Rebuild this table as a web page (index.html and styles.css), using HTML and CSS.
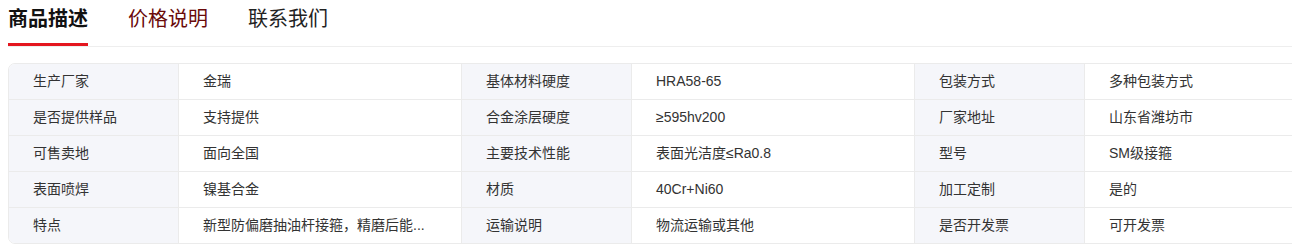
FILE: index.html
```html
<!DOCTYPE html>
<html lang="zh-CN">
<head>
<meta charset="utf-8">
<title>商品描述</title>
<link rel="stylesheet" href="styles.css">
</head>
<body>
<div class="page">
  <div class="tabs">
    <div class="tab active">商品描述</div>
    <div class="tab price">价格说明</div>
    <div class="tab">联系我们</div>
  </div>
  <div class="specs">
    <div class="row">
      <div class="cell label">生产厂家</div>
      <div class="cell value">金瑞</div>
      <div class="cell label">基体材料硬度</div>
      <div class="cell value">HRA58-65</div>
      <div class="cell label">包装方式</div>
      <div class="cell value">多种包装方式</div>
    </div>
    <div class="row">
      <div class="cell label">是否提供样品</div>
      <div class="cell value">支持提供</div>
      <div class="cell label">合金涂层硬度</div>
      <div class="cell value">≥595hv200</div>
      <div class="cell label">厂家地址</div>
      <div class="cell value">山东省潍坊市</div>
    </div>
    <div class="row">
      <div class="cell label">可售卖地</div>
      <div class="cell value">面向全国</div>
      <div class="cell label">主要技术性能</div>
      <div class="cell value">表面光洁度≤Ra0.8</div>
      <div class="cell label">型号</div>
      <div class="cell value">SM级接箍</div>
    </div>
    <div class="row">
      <div class="cell label">表面喷焊</div>
      <div class="cell value">镍基合金</div>
      <div class="cell label">材质</div>
      <div class="cell value">40Cr+Ni60</div>
      <div class="cell label">加工定制</div>
      <div class="cell value">是的</div>
    </div>
    <div class="row">
      <div class="cell label">特点</div>
      <div class="cell value">新型防偏磨抽油杆接箍，精磨后能...</div>
      <div class="cell label">运输说明</div>
      <div class="cell value">物流运输或其他</div>
      <div class="cell label">是否开发票</div>
      <div class="cell value">可开发票</div>
    </div>
  </div>
</div>
</body>
</html>
```

FILE: styles.css
```css
html, body {
  margin: 0;
  padding: 0;
  overflow: hidden;
  background: #fff;
}

body {
  font-family: "Liberation Sans", "Noto Sans CJK SC", sans-serif;
  color: #333;
}

.page {
  padding-left: 8px;
}

.tabs {
  display: flex;
  gap: 40px;
  padding-top: 5px;
  border-bottom: 1px solid #eeeeee;
}

.tab {
  font-size: 20px;
  line-height: 28px;
  padding-bottom: 10px;
  border-bottom: 3px solid transparent;
  color: #222;
}

.tab.active {
  font-weight: 700;
  color: #111;
  border-bottom-color: #e4161f;
}

.tab.price {
  color: #6a0a0a;
}

.specs {
  margin-top: 16px;
  width: 1360px;
  border: 1px solid #ebebeb;
  border-radius: 7px;
  overflow: hidden;
}

.row {
  display: grid;
  grid-template-columns: 170px 283px 170px 283px 170px 283px;
  border-bottom: 1px solid #ebebeb;
}

.row:last-child {
  border-bottom: none;
}

.cell {
  height: 35px;
  line-height: 35px;
  font-size: 14px;
  padding: 0 24px;
  border-right: 1px solid #ebebeb;
  white-space: nowrap;
  overflow: hidden;
  box-sizing: border-box;
}

.cell.label {
  background: #f5f6fa;
}

.cell.value {
  background: #fff;
}
```
